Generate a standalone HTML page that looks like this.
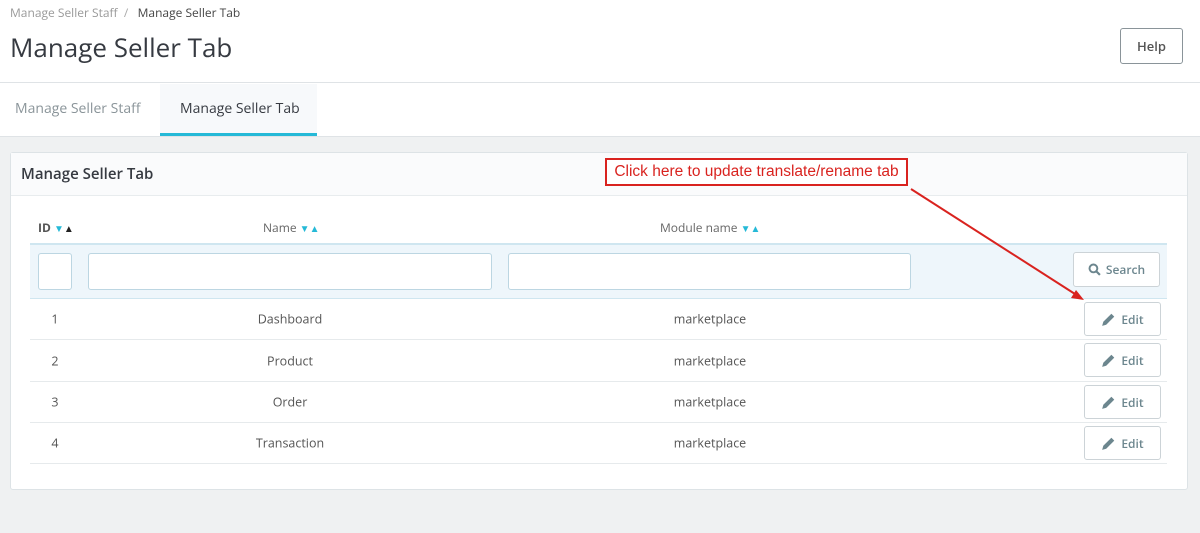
<!DOCTYPE html>
<html><head><style>
*{box-sizing:border-box;margin:0;padding:0}
body{width:1200px;height:533px;background:#eff1f2;font-family:"Open Sans","Liberation Sans",sans-serif;position:relative;overflow:hidden;color:#555}
.abs{position:absolute}
.hdr{left:0;top:0;width:1200px;height:83px;background:#fff;border-bottom:1px solid #dfe3e6}
.tabs{left:0;top:83px;width:1200px;height:54px;background:#fff;border-bottom:1px solid #dfe3e6}
.btn{position:absolute;background:#fff;border:1px solid #ccd3d7;border-radius:3px;font-size:12px;font-weight:600;color:#6c868e;display:flex;align-items:center;justify-content:center;gap:5px}
.inp{position:absolute;background:#fff;border:1px solid #bcd6e2;border-radius:3px;height:37px;top:253px}
.row{position:absolute;left:30px;width:1137px;border-bottom:1px solid #e6eaec;font-size:12.5px;color:#555}
.row span{position:absolute;top:50%;transform:translate(-50%,-50%)}
.ar{font-size:10px}
</style></head><body>
<div class="abs hdr"></div>
<div class="abs" style="left:10px;top:4px;font-size:12px;color:#999">Manage Seller Staff &nbsp;<span style="color:#aaa">/</span>&nbsp;&nbsp; <span style="color:#444">Manage Seller Tab</span></div>
<div class="abs" style="left:10px;top:29px;font-size:26px;color:#363a41">Manage Seller Tab</div>
<div class="btn" style="left:1120px;top:28px;width:63px;height:36px;font-size:13px;color:#555;border-color:#8a9499;font-weight:600">Help</div>
<div class="abs tabs"></div>
<div class="abs" style="left:15px;top:99px;font-size:14px;color:#8a9499">Manage Seller Staff</div>
<div class="abs" style="left:160px;top:84px;width:157px;height:52px;background:#f7f9fb;border-bottom:3px solid #25b9d7"></div>
<div class="abs" style="left:180px;top:99px;font-size:14px;color:#363a41">Manage Seller Tab</div>
<div class="abs" style="left:10px;top:152px;width:1178px;height:338px;background:#fff;border:1px solid #dde3e6;border-radius:3px"></div>
<div class="abs" style="left:11px;top:153px;width:1176px;height:43px;background:#fafbfc;border-bottom:1px solid #e8ecee"></div>
<div class="abs" style="left:21px;top:164px;font-size:15px;font-weight:600;color:#363a41">Manage Seller Tab</div>
<div class="abs" style="left:38px;top:219px;font-size:12px;font-weight:bold;color:#555">ID <span class="ar" style="color:#25b9d7">▼</span><span class="ar" style="color:#222">▲</span></div>
<div class="abs" style="left:263px;top:219px;font-size:12px;color:#666">Name <span class="ar" style="color:#25b9d7">▼▲</span></div>
<div class="abs" style="left:660px;top:219px;font-size:12px;color:#666">Module name <span class="ar" style="color:#25b9d7">▼▲</span></div>
<div class="abs" style="left:30px;top:243px;width:1137px;height:56px;background:#eef6fb;border-top:2px solid #cfe6f0;border-bottom:1px solid #cfe6f0"></div>
<div class="inp" style="left:38px;width:34px"></div>
<div class="inp" style="left:88px;width:404px"></div>
<div class="inp" style="left:508px;width:403px"></div>
<div class="btn" style="left:1073px;top:252px;width:87px;height:35px"><svg width="13" height="13" viewBox="0 0 12 12"><circle cx="5" cy="5" r="3.6" fill="none" stroke="#6c868e" stroke-width="1.8"/><path d="M7.6 7.6L11 11" stroke="#6c868e" stroke-width="2"/></svg>Search</div>
<div class="row" style="top:299px;height:41px"><span style="left:25px">1</span><span style="left:260px">Dashboard</span><span style="left:680px">marketplace</span></div>
<div class="row" style="top:340px;height:42px"><span style="left:25px">2</span><span style="left:260px">Product</span><span style="left:680px">marketplace</span></div>
<div class="row" style="top:382px;height:41px"><span style="left:25px">3</span><span style="left:260px">Order</span><span style="left:680px">marketplace</span></div>
<div class="row" style="top:423px;height:41px"><span style="left:25px">4</span><span style="left:260px">Transaction</span><span style="left:680px">marketplace</span></div>
<div class="btn" style="left:1084px;top:302px;width:77px;height:34px"><svg width="15" height="15" viewBox="0 0 13 13"><path d="M1 12l1-3.5 7-7 2.5 2.5-7 7z" fill="#6c868e"/></svg>Edit</div>
<div class="btn" style="left:1084px;top:343px;width:77px;height:34px"><svg width="15" height="15" viewBox="0 0 13 13"><path d="M1 12l1-3.5 7-7 2.5 2.5-7 7z" fill="#6c868e"/></svg>Edit</div>
<div class="btn" style="left:1084px;top:385px;width:77px;height:34px"><svg width="15" height="15" viewBox="0 0 13 13"><path d="M1 12l1-3.5 7-7 2.5 2.5-7 7z" fill="#6c868e"/></svg>Edit</div>
<div class="btn" style="left:1084px;top:426px;width:77px;height:34px"><svg width="15" height="15" viewBox="0 0 13 13"><path d="M1 12l1-3.5 7-7 2.5 2.5-7 7z" fill="#6c868e"/></svg>Edit</div>
<div class="abs" style="left:605px;top:158px;width:303px;height:28px;border:2px solid #d9231f;background:#fff;color:#d9231f;font-family:'Liberation Sans',sans-serif;font-size:15.5px;line-height:24px;text-align:center">Click here to update translate/rename tab</div>
<svg class="abs" style="left:0;top:0" width="1200" height="533"><line x1="911" y1="189" x2="1075" y2="294" stroke="#d9231f" stroke-width="2"/><path d="M1084 300l-13-2 5-8z" fill="#d9231f"/></svg>
</body></html>
